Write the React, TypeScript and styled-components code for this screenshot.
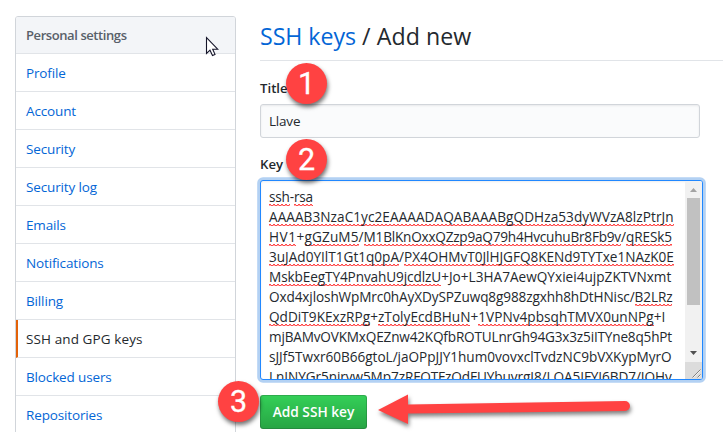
import React from 'react';
import styled, { createGlobalStyle } from 'styled-components';

const GlobalStyle = createGlobalStyle`
  *, *::before, *::after { box-sizing: border-box; }
  body {
    margin: 0;
    background: #fff;
    color: #24292e;
    font: 13.5px/20px "Open Sans", "Noto Sans", sans-serif;
    overflow: hidden;
  }
`;

const Page = styled.div`
  position: relative;
  display: flex;
  align-items: flex-start;
  gap: 24px;
  width: 723px;
  height: 432px;
  padding: 16px 0 0 15px;
  overflow: hidden;
`;

const Menu = styled.nav`
  flex: 0 0 221px;
  height: 440px;
  border: 1px solid #d1d5da;
  border-radius: 3px;
  overflow: hidden;
`;

const MenuHeading = styled.div`
  height: 37px;
  padding: 8px 10px;
  background: #f3f5f8;
  border-bottom: 1px solid #e1e4e8;
  color: #586069;
  font-size: 13px;
  font-weight: 600;
  letter-spacing: -0.42px;
`;

const MenuItem = styled.a<{ $selected?: boolean }>`
  display: block;
  height: 38px;
  padding: 9px 10px 8px ${p => (p.$selected ? 8 : 10)}px;
  border-bottom: 1px solid #e1e4e8;
  border-left: ${p => (p.$selected ? '2px solid #e36209' : '0')};
  color: ${p => (p.$selected ? '#24292e' : '#0366d6')};
  font-weight: ${p => (p.$selected ? 500 : 400)};
  letter-spacing: ${p => (p.$selected ? 0.1 : -0.14)}px;
`;

const Main = styled.main`
  flex: 1;
  display: flex;
  flex-direction: column;
  align-items: flex-start;
`;

const PageTitle = styled.h2`
  align-self: stretch;
  height: 45px;
  margin: 0 0 17px;
  padding-top: 2px;
  border-bottom: 1px solid #e1e4e8;
  font-size: 23.2px;
  line-height: 36px;
  font-weight: 400;
  letter-spacing: 0.04px;
`;

const TitleLink = styled.a`
  color: #0366d6;
  letter-spacing: -0.05px;
`;

const Label = styled.label`
  height: 20px;
  margin-bottom: 6px;
  font-size: 13.2px;
  font-weight: 600;
`;

const Input = styled.div`
  width: 440px;
  height: 34px;
  margin-bottom: 16px;
  padding: 6px 8px;
  border: 1px solid #d1d5da;
  border-radius: 3px;
  background: #fafbfc;
  box-shadow: inset 0 1px 2px rgba(27, 31, 35, 0.075);
  letter-spacing: -0.2px;
`;

const KeyArea = styled.div`
  display: flex;
  width: 443px;
  height: 200px;
  margin-bottom: 15px;
  border: 1px solid #2188ff;
  border-radius: 3px;
  background: #fff;
  box-shadow: inset 0 1px 2px rgba(27, 31, 35, 0.075), 0 0 0 2.8px rgba(3, 102, 214, 0.3);
  overflow: hidden;
`;

const KeyText = styled.div`
  flex: 1;
  min-width: 0;
  padding: 6px 0 0 8px;
  font-size: 13.6px;
  white-space: nowrap;
`;

const KeyLine = styled.div`
  display: flex;
  height: 20px;
`;

const Piece = styled.span<{ $spacing: number; $misspelt?: boolean }>`
  height: 20px;
  letter-spacing: ${p => p.$spacing}px;
  ${p =>
    p.$misspelt &&
    `
    background:
      repeating-linear-gradient(90deg, #ff4a4a 0 2px, transparent 2px 4px) 0 17px / 100% 1px no-repeat,
      repeating-linear-gradient(90deg, #ffa0a0 0 2px, #ff4a4a 2px 4px) 0 18px / 100% 1px no-repeat;
  `}
`;

const Scrollbar = styled.div`
  display: flex;
  flex-direction: column;
  align-items: center;
  flex: 0 0 17px;
  background: #f1f1f1;
`;

const ArrowCell = styled.svg`
  flex: none;
  width: 17px;
  height: 17px;
`;

const Thumb = styled.div`
  width: 13px;
  height: 107px;
  margin-bottom: auto;
  background: #c1c1c1;
`;

const Corner = styled.svg`
  flex: none;
  width: 17px;
  height: 17px;
  background: #dcdcdc;
`;

const Submit = styled.button`
  width: 107px;
  height: 34px;
  padding: 0 0 1px;
  border: 1px solid rgba(27, 31, 35, 0.2);
  border-radius: 3px;
  background: linear-gradient(-180deg, #34d058 0%, #28a745 90%) -1px -1px / 110% 110%;
  color: #fff;
  font: 600 13.7px/20px "Open Sans", "Noto Sans", sans-serif;
`;

const Step = styled.div<{ $x: number; $y: number }>`
  position: absolute;
  left: ${p => p.$x}px;
  top: ${p => p.$y}px;
  width: 41px;
  height: 41px;
  border-radius: 50%;
  background: #ff4242;
  box-shadow: 1px 3px 4px rgba(0, 0, 0, 0.55);
  color: #fff;
  font: 30.5px/41px Roboto, "Liberation Sans", sans-serif;
  -webkit-text-stroke: 0.3px #fff;
  text-align: center;
`;

const Pointer = styled.svg`
  position: absolute;
  left: 205px;
  top: 36px;
  width: 15px;
  height: 22px;
`;

const RedArrow = styled.svg`
  position: absolute;
  left: 370px;
  top: 388px;
  width: 270px;
  height: 44px;
  filter: drop-shadow(1px 3px 2px rgba(0, 0, 0, 0.5));
`;

const menu = [
  'Profile',
  'Account',
  'Security',
  'Security log',
  'Emails',
  'Notifications',
  'Billing',
  'SSH and GPG keys',
  'Blocked users',
  'Repositories',
];

type PieceData = [text: string, spacing: number, misspelt?: boolean];

const keyLines: PieceData[][] = [
  [['ssh', -0.2, true], ['-', 0], ['rsa', -0.3, true]],
  [['AAAAB3NzaC1yc2EAAAADAQABAAABgQDHza53dyWVzA8lzPtrJn', 0.06, true]],
  [
    ['HV1', 0.5, true],
    ['+', 0.4],
    ['gGZuM5', 0.1, true],
    ['/', 0],
    ['M1BlKnOxxQZzp9aQ79h4HvcuhuBr8Fb9v', -0.22, true],
    ['/', 0],
    ['qRESk5', -0.1, true],
  ],
  [['3uJAd0YIlT1Gt1q0pA', 0, true], ['/', 0], ['PX4OHMvT0JlHJGFQ8KENd9TYTxe1NAzK0E', -0.03, true]],
  [['MskbEegTY4PnvahU9jcdlzU', -0.1, true], ['+', 0], ['Jo+L3HA7AewQYxiei4ujpZKTVNxmt', 0.02]],
  [['Oxd4xjloshWpMrc0hAyXDySPZuwq8g988zgxhh8hDtHNisc/', -0.115], ['B2LRz', -0.1, true]],
  [
    ['QdDiT9KExzRPg', 0.03, true],
    ['+', 0],
    ['zTolyEcdBHuN', 0.04, true],
    ['+', 0],
    ['1VPNv4pbsqhTMVX0unNPg', 0.04, true],
    ['+I', 0.04],
  ],
  [['mjBAMvOVKMxQEZnw42KQfbROTULnrGh94G3x3z5iITYne8q5hPt', -0.18]],
  [['sJJf5Twxr60B66gtoL/jaOPpJJY1hum0vovxclTvdzNC9bVXKypMyrO', -0.03]],
  [['LnINYGr5nirvw5Mp7zRFOTFzQdFUYbuvrgJ8/LOA5IFYI6BD7/IOHv', -0.08]],
];

export default function App() {
  return (
    <>
      <GlobalStyle />
      <Page>
        <Menu>
          <MenuHeading>Personal settings</MenuHeading>
          {menu.map(name => (
            <MenuItem key={name} $selected={name === 'SSH and GPG keys'}>
              {name}
            </MenuItem>
          ))}
        </Menu>
        <Main>
          <PageTitle>
            <TitleLink>SSH keys</TitleLink> / Add new
          </PageTitle>
          <Label>Title</Label>
          <Input>Llave</Input>
          <Label>Key</Label>
          <KeyArea>
            <KeyText>
              {keyLines.map((pieces, i) => (
                <KeyLine key={i}>
                  {pieces.map(([text, spacing, misspelt], j) => (
                    <Piece key={j} $spacing={spacing} $misspelt={misspelt}>
                      {text}
                    </Piece>
                  ))}
                </KeyLine>
              ))}
            </KeyText>
            <Scrollbar>
              <ArrowCell viewBox="0 0 17 17">
                <path d="M5 11h7L8.500 7z" fill="#a3a3a3" />
              </ArrowCell>
              <Thumb />
              <ArrowCell viewBox="0 0 17 17">
                <path d="M5 6h7L8.500 10z" fill="#505050" />
              </ArrowCell>
              <Corner viewBox="0 0 17 17">
                <path d="M7.500 15.500l8-8M12.500 15.500l3-3" stroke="#808080" fill="none" />
                <path d="M8.500 15.500l7-7M13.500 15.500l2-2" stroke="#fff" strokeWidth=".6" fill="none" />
              </Corner>
            </Scrollbar>
          </KeyArea>
          <Submit>Add SSH key</Submit>
        </Main>
        <Step $x={286} $y={63}>1</Step>
        <Step $x={286} $y={139}>2</Step>
        <Step $x={218} $y={381}>3</Step>
        <RedArrow viewBox="0 0 270 44">
          <path d="M8 22L38 6.500V16.500L255 13A5 5 0 0 1 255 23L38 25.500V36z" fill="#ff4242" />
        </RedArrow>
        <Pointer viewBox="0 0 15 22">
          <path
            d="M1.500 1.500V17.500L5 14.200L7.500 19.500L10 18.400L7.700 13.200H12.700z"
            fill="#fff"
            stroke="#15152a"
            strokeWidth="1.1"
          />
        </Pointer>
      </Page>
    </>
  );
}
